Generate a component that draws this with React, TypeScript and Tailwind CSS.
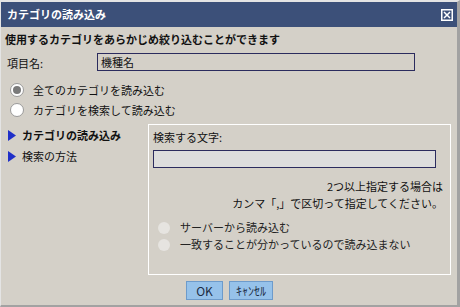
import type { FC } from "react";

const font = { fontFamily: '"Noto Sans CJK JP", "Liberation Sans", sans-serif' };

const CloseIcon: FC = () => (
  <svg width="12" height="12" viewBox="0 0 12 12" className="shrink-0">
    <rect x="0.75" y="0.75" width="10.5" height="10.5" fill="none" stroke="#ffffff" strokeWidth="1.5" />
    <path d="M3 3 L9 9 M9 3 L3 9" stroke="#ffffff" strokeWidth="1.5" />
  </svg>
);

const Triangle: FC = () => (
  <svg width="8" height="11" viewBox="0 0 8 11" className="shrink-0">
    <path d="M0 0 L8 5.5 L0 11 Z" fill="#1f2fc8" />
  </svg>
);

const Radio: FC<{ checked?: boolean }> = ({ checked }) => (
  <span className="flex size-[14px] shrink-0 items-center justify-center rounded-full border border-[#9a9a9a] bg-white">
    {checked && <span className="size-[8px] rounded-full bg-[#7a7a7a]" />}
  </span>
);

const DisabledRadio: FC = () => (
  <span className="size-[12px] shrink-0 rounded-full bg-[#e6e4e0]" />
);

export default function App() {
  return (
    <div
      className="flex h-[307px] w-[460px] flex-col border-t-2 border-r-[3px] border-b-2 border-l border-t-[#e4e4e4] border-r-[#a2a2a2] border-b-[#a2a2a2] border-l-[#e4e4e4] bg-[#d4d0c8] text-[11px] text-[#111]"
      style={font}
    >
      <div className="flex h-[25px] shrink-0 items-center justify-between bg-[#3c5079] pr-[4px] pl-[6px]">
        <span className="font-bold text-white">カテゴリの読み込み</span>
        <CloseIcon />
      </div>

      <p className="mt-[4px] h-[16px] pl-[4px] leading-[16px] font-bold">
        使用するカテゴリをあらかじめ絞り込むことができます
      </p>

      <div className="mt-[6px] flex h-[18px] items-center">
        <span className="w-[96px] pt-[2px] pl-[6px]">項目名:</span>
        <div className="flex h-[18px] w-[318px] items-center border border-[#2b2b5e] pl-[3px] leading-none">
          機種名
        </div>
      </div>

      <div className="mt-[9px] flex flex-col">
        <label className="flex h-[20px] items-center gap-[9px] pl-[9px]">
          <Radio checked />
          全てのカテゴリを読み込む
        </label>
        <label className="flex h-[20px] items-center gap-[9px] pl-[9px]">
          <Radio />
          カテゴリを検索して読み込む
        </label>
      </div>

      <div className="mt-[4px] flex">
        <div className="flex w-[147px] flex-col pt-[3px]">
          <div className="flex h-[16px] items-center gap-[6px] pl-[7px] font-bold">
            <Triangle />
            カテゴリの読み込み
          </div>
          <div className="mt-[5px] flex h-[16px] items-center gap-[6px] pl-[7px]">
            <Triangle />
            検索の方法
          </div>
        </div>

        <div className="flex h-[151px] w-[303px] flex-col border border-white pr-[7px] pl-[4px]">
          <p className="mt-[4px] h-[16px] leading-[16px]">検索する文字:</p>
          <div className="mt-[5px] h-[18px] w-[283px] border border-[#2b2b5e] bg-[#dddddd]" />
          <p className="mt-[10px] h-[17px] text-right leading-[17px]">2つ以上指定する場合は</p>
          <p className="h-[17px] text-right leading-[17px]">カンマ「,」で区切って指定してください。</p>
          <div className="mt-[7px] flex flex-col text-[#222]">
            <div className="flex h-[17px] items-center gap-[10px] pl-[5px]">
              <DisabledRadio />
              サーバーから読み込む
            </div>
            <div className="flex h-[17px] items-center gap-[10px] pl-[5px]">
              <DisabledRadio />
              一致することが分かっているので読み込まない
            </div>
          </div>
        </div>
      </div>

      <div className="mt-[6px] flex gap-[6px] pl-[185px]">
        <button className="flex h-[19px] w-[37px] items-center justify-center border border-[#6d9bcb] bg-[#96c2ea] text-[12px] text-[#1d2d44]">
          OK
        </button>
        <button className="flex h-[19px] w-[44px] items-center justify-center border border-[#6d9bcb] bg-[#96c2ea] text-[12px] text-[#1d2d44]">
          ｷｬﾝｾﾙ
        </button>
      </div>
    </div>
  );
}
